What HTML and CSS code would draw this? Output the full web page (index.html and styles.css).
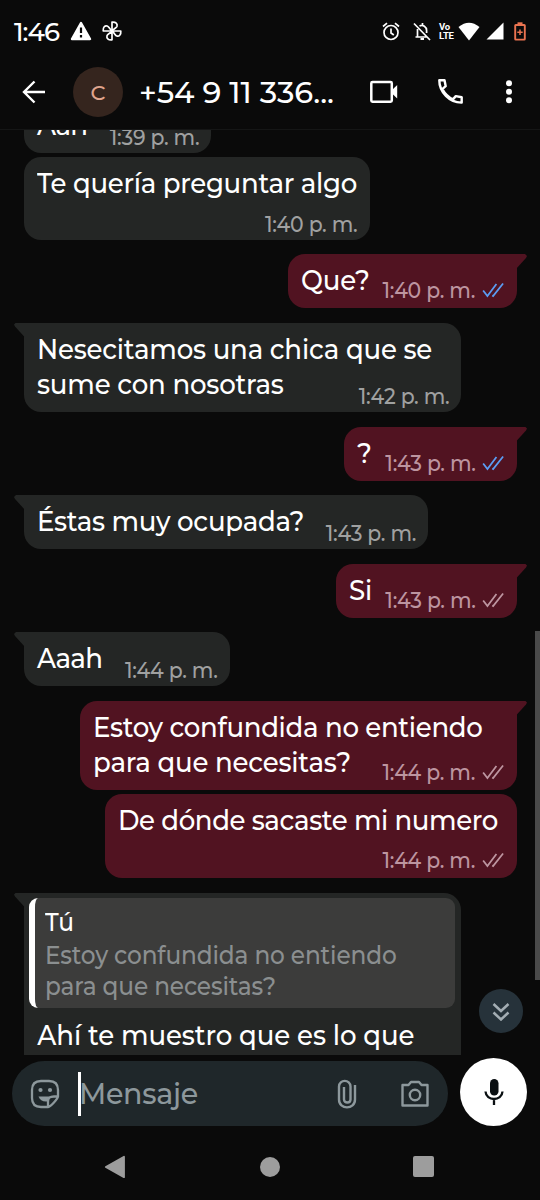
FILE: index.html
```html
<!DOCTYPE html>
<html lang="es">
<head>
<meta charset="utf-8">
<title>Chat</title>
<link rel="stylesheet" href="styles.css">
</head>
<body>
<div class="phone">
  <header class="top">
    <div class="status">
      <span class="clock">1:46</span>
      <svg class="st-warn" width="22" height="20" viewBox="0 0 22 20"><path d="M11 2 20 18H2Z" fill="#fff" stroke="#fff" stroke-width="2.4" stroke-linejoin="round"/><path d="M11 6.5v5.5M11 14v2.500" stroke="#0a0a0a" stroke-width="2.2"/></svg>
      <svg class="st-fan" width="20" height="20" viewBox="0 0 20 20" fill="none" stroke="#fff" stroke-width="1.7" stroke-linejoin="round"><path id="blade" d="M10 10V1.2C14 .8 15.600 3 15 5.200 14.400 7 12.500 7 10 10Z"/><use href="#blade" transform="rotate(90 10 10)"/><use href="#blade" transform="rotate(180 10 10)"/><use href="#blade" transform="rotate(270 10 10)"/></svg>
      <div class="status-right">
        <svg width="18" height="19" viewBox="0 0 18 19" fill="none" stroke="#fff" stroke-width="1.700"><circle cx="9" cy="10.500" r="7"/><path d="M9 6.500v4.500l2.800 2M1 4.500 5 1.200M17 4.500 13 1.200"/></svg>
        <svg class="st-bell" width="18" height="19" viewBox="0 0 18 19" fill="none" stroke="#fff" stroke-width="1.700"><path d="M4.500 7V14.500M2.500 15H14M6.500 4C10 2.300 13.600 5 13.600 8.500V11M9.500 1v2.500M1 1.500 17 18"/><path d="M7.500 17h3.500" stroke-width="2"/></svg>
        <span class="volte"><span>Vo</span><span>LTE</span></span>
        <svg class="st-wifi" width="22" height="19" viewBox="0 0 22 19"><path d="M.5 5Q11-3.500 21.500 5L11 18.500Z" fill="#fff"/></svg>
        <svg class="st-cell" width="18" height="18" viewBox="0 0 18 18"><path d="M17.500.5V17.500H.5Z" fill="#fff"/></svg>
        <svg class="st-batt" width="12" height="19" viewBox="0 0 12 19" fill="none" stroke="#ea7350"><rect x="1.200" y="3" width="9.600" height="14.600" rx=".6" stroke-width="1.900"/><path d="M3.500 1.500h5" stroke-width="2.400"/><path d="M6 7.500v5.500M3.300 10.200h5.400" stroke-width="1.500"/></svg>
      </div>
    </div>
    <div class="appbar">
      <svg class="back" width="24" height="24" viewBox="0 0 24 24" fill="none" stroke="#fff" stroke-width="2.400"><path d="M12.500 1.500 2 12 12.500 22.500M2 12H23"/></svg>
      <span class="avatar">C</span>
      <span class="contact">+54 9 11 336...</span>
      <svg class="video" width="30" height="24" viewBox="0 0 30 24"><rect x="2.300" y="2" width="20.500" height="19.800" rx="1.200" fill="none" stroke="#fff" stroke-width="2.500"/><path d="M22.500 10.500 28.200 5V18.500L22.500 13Z" fill="#fff"/></svg>
      <svg class="call" width="27" height="27" viewBox="0 0 28 28" fill="none" stroke="#fff" stroke-width="2.500" stroke-linejoin="round"><path d="M2.400 2.400H7.800L9 8.500 5.500 11.500C8 16 11.500 19.800 16.500 22.200L19.500 18.800 25.600 20V25.500C13 25.700 2.300 14.500 2.400 2.400Z"/></svg>
      <svg class="more" width="8" height="24" viewBox="0 0 8 24" fill="#fff"><circle cx="4" cy="3.300" r="3"/><circle cx="4" cy="11.800" r="3"/><circle cx="4" cy="20.300" r="3"/></svg>
    </div>
  </header>

  <main class="chat">
    <div class="msg in w-a"><p class="text">Aah</p><span class="time">1:39 p. m.</span></div>
    <div class="msg in w-b gap-s"><p class="text">Te quería preguntar algo</p><span class="time">1:40 p. m.</span></div>
    <div class="msg out tail w-c"><p class="text">Que?</p><span class="time">1:40 p. m.<svg class="ticks read" viewBox="0 0 24 16"><path d="M1.500 8.500 6 14 15.500 2M11 13.500 12 14 22.500 1.500"/></svg></span></div>
    <div class="msg in tail w-d"><p class="text">Nesecitamos una chica que se<br>sume con nosotras</p><span class="time">1:42 p. m.</span></div>
    <div class="msg out tail w-e"><p class="text">?</p><span class="time">1:43 p. m.<svg class="ticks read" viewBox="0 0 24 16"><path d="M1.500 8.500 6 14 15.500 2M11 13.500 12 14 22.500 1.500"/></svg></span></div>
    <div class="msg in tail w-f"><p class="text">Éstas muy ocupada?</p><span class="time">1:43 p. m.</span></div>
    <div class="msg out tail w-g"><p class="text">Si</p><span class="time">1:43 p. m.<svg class="ticks" viewBox="0 0 24 16"><path d="M1.500 8.500 6 14 15.500 2M11 13.500 12 14 22.500 1.500"/></svg></span></div>
    <div class="msg in tail w-h"><p class="text">Aaah</p><span class="time">1:44 p. m.</span></div>
    <div class="msg out tail w-i"><p class="text">Estoy confundida no entiendo<br><span class="line-b">para que necesitas?</span></p><span class="time">1:44 p. m.<svg class="ticks" viewBox="0 0 24 16"><path d="M1.500 8.500 6 14 15.500 2M11 13.500 12 14 22.500 1.500"/></svg></span></div>
    <div class="msg out w-j gap-s"><p class="text">De dónde sacaste mi numero</p><span class="time">1:44 p. m.<svg class="ticks" viewBox="0 0 24 16"><path d="M1.500 8.500 6 14 15.500 2M11 13.500 12 14 22.500 1.500"/></svg></span></div>
    <div class="msg in tail reply">
      <div class="quote"><p class="author">Tú</p><p class="quoted">Estoy confundida no entiendo<br>para que necesitas?</p></div>
      <p class="text">Ahí te muestro que es lo que</p>
    </div>
    <div class="scrollbar"></div>
    <div class="jump"><svg width="18" height="20" viewBox="0 0 18 20" fill="none" stroke="#a3adb3" stroke-width="2.500"><path d="M1.500 3 9 10 16.500 3M1.500 11.500 9 18.500 16.500 11.500"/></svg></div>
  </main>

  <footer class="composer">
    <div class="field">
      <svg class="sticker" width="30" height="30" viewBox="0 0 30 30" fill="none" stroke="#8d989c" stroke-width="2.300"><path d="M18 28H11C4.500 28 2 25 2 19V11C2 4.500 5 2 11 2H19C25 2 28 5 28 11V17.500C27.500 20 21 27.500 18 28ZM28 17.500H24C19.500 17.500 18 19 18 23V28" stroke-linejoin="round"/><circle cx="10.500" cy="11" r="2.100" fill="#8d989c" stroke="none"/><circle cx="20" cy="11" r="2.100" fill="#8d989c" stroke="none"/><path d="M8.500 17.500H21L17.500 22.500C13 23 10 21.500 8.500 17.500Z" fill="#8d989c" stroke="none"/></svg>
      <span class="caret"></span><span class="placeholder">Mensaje</span>
      <svg class="clip" width="20" height="30" viewBox="0 0 20 30" fill="none" stroke="#8d989c" stroke-width="2.400"><path d="M18 6V20.500C18 31 2 31 2 20.500V7.500C2 0 13.500 0 13.500 7.500V20.500C13.500 24.500 7 24.500 7 20.500V8"/></svg>
      <svg class="camera" width="30" height="28" viewBox="0 0 30 28" fill="none" stroke="#8d989c" stroke-width="2.400" stroke-linejoin="round"><path d="M2.500 5H8.500L11 2H19L21.500 5H27.500V25.500H2.500Z"/><circle cx="15" cy="15" r="5.200"/></svg>
    </div>
    <div class="mic"><svg width="20" height="28" viewBox="0 0 20 28"><rect x="6" y="1" width="8.500" height="16.500" rx="4.250" fill="#0a0f12"/><path d="M1.500 13.500C2 23.500 18 23.500 18.500 13.500M10 21V27" fill="none" stroke="#0a0f12" stroke-width="2.300"/></svg></div>
  </footer>

  <nav class="nav">
    <svg width="22" height="24" viewBox="0 0 22 24"><path d="M1.800 12 20 1.800V22.200Z" fill="#9d9d9d" stroke="#9d9d9d" stroke-width="1.800" stroke-linejoin="round"/></svg>
    <span class="home"></span>
    <span class="recent"></span>
  </nav>
</div>
</body>
</html>
```
FILE: styles.css
```css
* { box-sizing: border-box; }
body {
  margin: 0;
  background: #0a0a0a;
  color: #fff;
  font-family: Montserrat, Inter, sans-serif;
  font-weight: 500;
}
p { margin: 0; }
svg { display: block; flex: none; }
.phone {
  width: 540px;
  height: 1200px;
  display: flex;
  flex-direction: column;
  overflow: hidden;
  background: #0a0a0a;
}

/* Status bar and app bar */
.top { height: 130px; border-bottom: 1px solid #151616; flex: none; }
.status { height: 62px; padding-left: 14px; display: flex; align-items: center; }
.clock { width: 56px; font-size: 26px; letter-spacing: -1px; line-height: 62px; padding-top: 2px; }
.st-fan { margin-left: 10px; }
.status-right { margin-left: auto; padding-right: 14px; display: flex; align-items: center; }
.st-bell { margin-left: 13px; }
.volte { margin-left: 8px; width: 16px; display: flex; flex-direction: column; font: 700 9.500px/9px Roboto, sans-serif; letter-spacing: -0.2px; }
.st-wifi { margin-left: 3px; }
.st-cell { margin-left: 6px; }
.st-batt { margin-left: 10px; }
.appbar { height: 67px; padding: 0 27px 8px 22px; display: flex; align-items: center; }
.avatar {
  width: 50px; height: 50px; margin-left: 27px; border-radius: 50%;
  background: #35251e; color: #e0a58e; font-size: 21px; line-height: 51px; text-align: center;
}
.contact { width: 202px; margin-left: 16px; font-size: 30.5px; letter-spacing: -0.1px; white-space: nowrap; }
.video { margin-left: 28px; }
.call { margin-left: 38px; }
.more { margin-left: auto; }

/* Conversation */
.chat {
  position: relative;
  height: 925px; flex: none;
  padding: 0 23px 0 24px;
  display: flex; flex-direction: column; align-items: flex-start;
  overflow: hidden;
}
.msg {
  position: relative;
  display: grid; flex: none;
  grid-template-columns: minmax(0, 1fr);
  min-height: 54px;
  margin-top: 14.5px;
  padding: 9px 12px 0 13px;
  border-radius: 17px;
  background: #242625;
}
.msg.gap-s { margin-top: 4px; }
.out { align-self: flex-end; background: #511321; }
.tail.in { border-top-left-radius: 0; }
.tail.out { border-top-right-radius: 0; }
.tail::before {
  content: "";
  position: absolute; top: 0; left: -10px;
  width: 11px; height: 15px;
  background: inherit;
  clip-path: polygon(2px 0, 11px 0, 11px 15px, 1px 4px, 0 2px);
}
.tail.out::before { left: auto; right: -10px; transform: scaleX(-1); }
.text, .time { grid-area: 1 / 1; white-space: nowrap; }
.text {
  font-size: 28px; letter-spacing: -0.2px; line-height: 35.5px;
  transform: scaleX(0.93); transform-origin: left;
}
.time {
  display: flex; align-items: center;
  align-self: end; justify-self: end;
  font-size: 21.5px; letter-spacing: -0.25px; line-height: 26px; color: #a0a1a1;
  margin-bottom: 3px;
  transform: scaleX(0.95); transform-origin: right;
}
.out .time { color: #bd95a0; margin-bottom: 5px; }
.ticks { width: 25px; height: 16px; margin-left: 6px; fill: none; stroke: currentColor; stroke-width: 1.9; }
.read { color: #5b9cf2; }
.w-a { width: 187px; margin-top: -31px; }
.w-a .text { letter-spacing: -0.7px; }
.w-b { width: 346px; height: 82.500px; }
.w-b .text { letter-spacing: -0.300px; }
.w-c { width: 229px; }
.w-d { width: 437px; height: 89.500px; }
.w-e { width: 173px; }
.w-f { width: 404px; }
.w-f .text { letter-spacing: -0.300px; }
.w-g { width: 181px; }
.w-h { width: 206px; }
.w-h .text { letter-spacing: -0.700px; }
.w-i { width: 437px; height: 89.500px; }
.w-i .text { letter-spacing: -0.330px; }
.w-i .line-b { letter-spacing: -0.200px; }
.w-j { width: 412px; height: 84px; }
.w-j .text { letter-spacing: -0.420px; }
.reply { display: block; width: 437px; height: 190px; padding: 5px 6px 0 5px; }
.reply > .text { padding: 9.500px 0 0 9px; letter-spacing: -0.100px; }
.quote {
  height: 110.500px; padding: 6px 0 0 10px;
  border-left: 6px solid #fff; border-radius: 9px;
  background: #3c3c3b;
}
.author, .quoted { font-size: 25px; transform: scaleX(0.93); transform-origin: left; }
.author { letter-spacing: -0.2px; line-height: 36px; }
.quoted { letter-spacing: -0.15px; line-height: 31px; color: #8b8f90; white-space: nowrap; }
.scrollbar { position: absolute; right: 0; top: 501px; width: 5px; height: 349px; background: #4a4a4a; }
.jump {
  position: absolute; right: 17px; top: 859px;
  width: 44px; height: 44px; border-radius: 50%;
  background: #26323a; display: grid; place-items: center;
}

/* Message composer */
.composer { height: 78px; flex: none; padding: 3px 13px 0 12px; display: flex; justify-content: space-between; }
.field { width: 436px; height: 65px; margin-top: 3px; border-radius: 33px; background: #1f272a; display: flex; align-items: center; padding: 0 18px; }
.caret { width: 3px; height: 44px; margin-left: 18px; background: #fff; }
.placeholder { margin-left: -2px; font-size: 30px; letter-spacing: -0.3px; color: #8d989c; transform: scaleX(0.95); transform-origin: left; }
.clip { margin-left: auto; }
.camera { margin-left: 43px; }
.mic { width: 67px; height: 68px; border-radius: 50%; background: #fff; display: grid; place-items: center; }

/* System navigation */
.nav { height: 67px; padding: 0 106px 0 104px; display: flex; align-items: center; justify-content: space-between; }
.home { width: 20px; height: 20px; border-radius: 50%; background: #9d9d9d; }
.recent { width: 21px; height: 21px; border-radius: 2px; background: #9d9d9d; }
```
